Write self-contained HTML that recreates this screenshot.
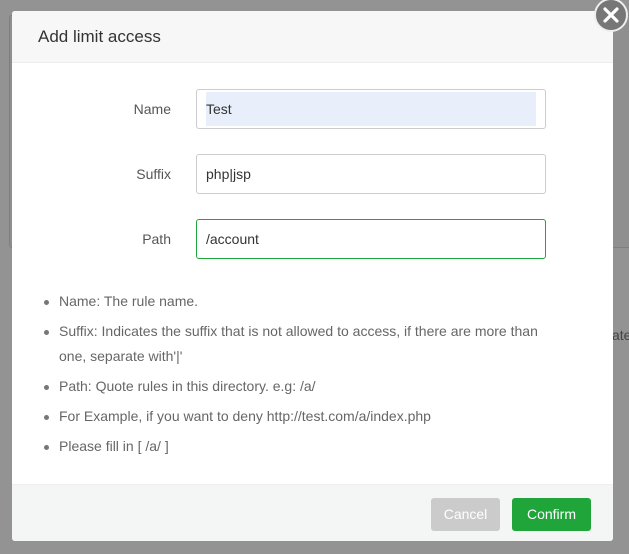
<!DOCTYPE html>
<html><head><meta charset="utf-8"><style>
*{box-sizing:border-box;margin:0;padding:0}
body{width:629px;height:554px;background:#939393;font-family:"Liberation Sans",sans-serif;position:relative;overflow:hidden}
.bgpanel{position:absolute;left:9px;top:15px;width:640px;height:233px;background:#8f8f8f;border:1px solid #7f7f7f;border-radius:3px}
.bgtxt{position:absolute;left:612px;top:327px;font-size:14px;color:#444}
.dlg{position:absolute;left:12px;top:11px;width:601px;height:530px;background:#fff;border-radius:3px;overflow:hidden}
.hd{height:52px;background:#f7f7f7;border-bottom:1px solid #ececec;padding-left:26px;line-height:52px;font-size:17px;color:#333}
.row{position:absolute;left:0;width:601px;height:40px}
.row label{position:absolute;right:442px;top:0;line-height:40px;font-size:14px;color:#555}
.row .in{position:absolute;left:184px;top:0;width:350px;height:40px;border:1px solid #ccc;border-radius:3px;font-size:14px;color:#333;line-height:38px;padding-left:9px}
.ul{position:absolute;left:32px;top:278px;width:505px;font-size:14px;color:#666;line-height:25px}
.ul li{list-style:none;position:relative;padding-left:15px;margin-bottom:5px}
.ul li:before{content:"";position:absolute;left:0;top:11px;width:5px;height:5px;border-radius:50%;background:#777}
.ft{position:absolute;left:0;top:473px;width:601px;height:57px;background:#f4f5f5;border-top:1px solid #eee}
.btn{position:absolute;top:13px;height:33px;line-height:33px;text-align:center;color:#fff;font-size:14px;border-radius:3px}
.close{position:absolute;left:594px;top:-2px;width:34px;height:34px;border-radius:50%;background:#777;border:2px solid #eee}
</style></head><body>
<div class="bgpanel"></div>
<div class="bgtxt">ate</div>
<div class="dlg">
<div class="hd">Add limit access</div>
<div class="row" style="top:78px"><label>Name</label><div class="in"><span style="display:block;position:absolute;left:9px;top:2px;width:330px;height:34px;background:#e8effb"></span><span style="position:relative">Test</span></div></div>
<div class="row" style="top:143px"><label>Suffix</label><div class="in">php|jsp</div></div>
<div class="row" style="top:208px"><label>Path</label><div class="in" style="border-color:#20a53a">/account</div></div>
<ul class="ul">
<li>Name: The rule name.</li>
<li>Suffix: Indicates the suffix that is not allowed to access, if there are more than one, separate with'|'</li>
<li>Path: Quote rules in this directory. e.g: /a/</li>
<li>For Example, if you want to deny http://test.com/a/index.php</li>
<li>Please fill in [ /a/ ]</li>
</ul>
<div class="ft">
<div class="btn" style="left:419px;width:69px;background:#cbcbcb">Cancel</div>
<div class="btn" style="left:500px;width:79px;background:#20a53a">Confirm</div>
</div>
</div>
<div class="close"><svg width="30" height="30" viewBox="0 0 30 30" style="position:absolute;left:0;top:0"><path d="M9 9L21 21M21 9L9 21" stroke="#fff" stroke-width="3.2" stroke-linecap="round"/></svg></div>
</body></html>
